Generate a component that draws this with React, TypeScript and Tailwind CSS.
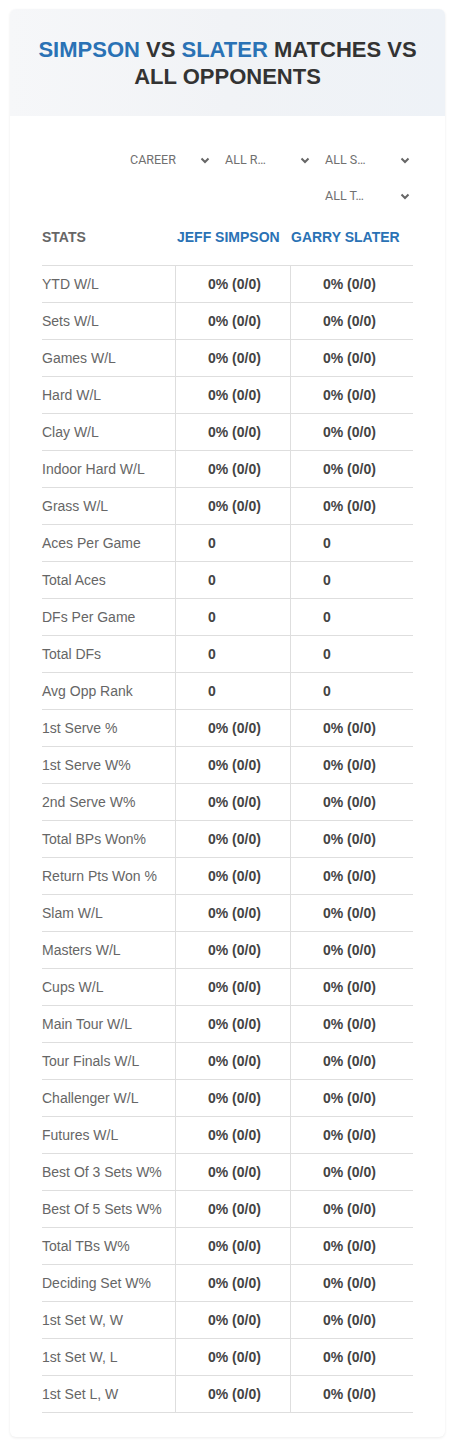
const pct = "0% (0/0)";

const rows: [string, string][] = [
  ["YTD W/L", pct],
  ["Sets W/L", pct],
  ["Games W/L", pct],
  ["Hard W/L", pct],
  ["Clay W/L", pct],
  ["Indoor Hard W/L", pct],
  ["Grass W/L", pct],
  ["Aces Per Game", "0"],
  ["Total Aces", "0"],
  ["DFs Per Game", "0"],
  ["Total DFs", "0"],
  ["Avg Opp Rank", "0"],
  ["1st Serve %", pct],
  ["1st Serve W%", pct],
  ["2nd Serve W%", pct],
  ["Total BPs Won%", pct],
  ["Return Pts Won %", pct],
  ["Slam W/L", pct],
  ["Masters W/L", pct],
  ["Cups W/L", pct],
  ["Main Tour W/L", pct],
  ["Tour Finals W/L", pct],
  ["Challenger W/L", pct],
  ["Futures W/L", pct],
  ["Best Of 3 Sets W%", pct],
  ["Best Of 5 Sets W%", pct],
  ["Total TBs W%", pct],
  ["Deciding Set W%", pct],
  ["1st Set W, W", pct],
  ["1st Set W, L", pct],
  ["1st Set L, W", pct],
];

const Chevron = () => (
  <svg width="10" height="7" viewBox="0 0 10 7" className="shrink-0">
    <path d="M1.5 1.5 L5 5 L8.5 1.5" fill="none" stroke="#666" strokeWidth="2" />
  </svg>
);

const Select = ({ label, wide }: { label: string; wide?: boolean }) => (
  <div
    className={`flex h-[16px] w-[100px] items-center justify-between pr-[3px] font-[family-name:Roboto,sans-serif] text-[12.5px] text-[#707070] ${
      wide ? "pl-[17px]" : "pl-[12px]"
    }`}
  >
    <span>{label}</span>
    <Chevron />
  </div>
);

export default function App() {
  return (
    <div className="min-h-[1448px] bg-white pt-[9px] font-[family-name:Liberation_Sans,Arial,sans-serif]">
      <div className="mx-[10px] rounded-[6px] bg-white pb-[24px] shadow-[0_1px_3px_rgba(0,0,0,0.08)]">
        <div className="flex h-[107px] items-center justify-center rounded-t-[6px] bg-gradient-to-r from-[#f6f7f9] via-[#f1f3f6] to-[#eef2f7] px-[16px]">
          <h1 className="text-center text-[22px] font-bold leading-[27px] text-[#333]">
            <span className="text-[#2a72b5]">SIMPSON</span> VS{" "}
            <span className="text-[#2a72b5]">SLATER</span> MATCHES VS ALL OPPONENTS
          </h1>
        </div>

        <div className="mt-[36px] flex flex-col items-end gap-[20px] pr-[32px]">
          <div className="flex">
            <Select label="CAREER" wide />
            <Select label="ALL R…" />
            <Select label="ALL S…" />
          </div>
          <Select label="ALL T…" />
        </div>

        <div className="mx-[32px] mt-[13px]">
          <div className="grid h-[48px] grid-cols-[134px_115px_122px] items-start pt-[12px] text-[14px] font-bold leading-[16px]">
            <div className="text-[#666]">STATS</div>
            <div className="pl-[1px] text-[#2a72b5]">JEFF SIMPSON</div>
            <div className="text-[#2a72b5]">GARRY SLATER</div>
          </div>
          <div className="border-t border-[#dedede]">
            {rows.map(([label, value]) => (
              <div
                key={label}
                className="grid h-[37px] grid-cols-[134px_115px_122px] border-b border-[#dedede] text-[14px]"
              >
                <div className="flex items-center border-r border-[#dedede] text-[#666]">{label}</div>
                <div className="flex items-center border-r border-[#dedede] pl-[32px] font-bold text-[#444]">
                  {value}
                </div>
                <div className="flex items-center pl-[32px] font-bold text-[#444]">{value}</div>
              </div>
            ))}
          </div>
        </div>
      </div>
    </div>
  );
}
